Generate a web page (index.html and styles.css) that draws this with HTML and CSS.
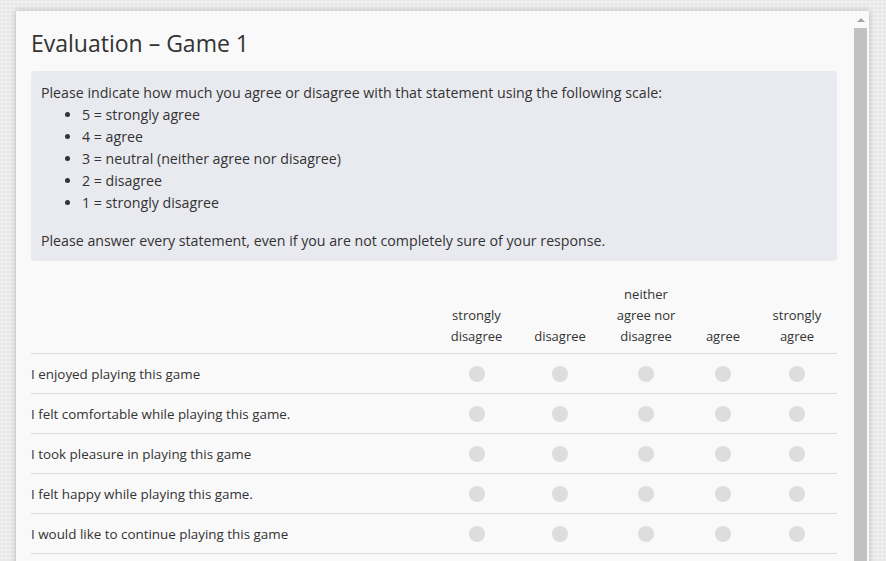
FILE: index.html
```html
<!DOCTYPE html>
<html>
<head>
<meta charset="utf-8">
<link rel="stylesheet" href="styles.css">
</head>
<body>
<div class="card">
  <div class="content">
    <h1 class="title">Evaluation – Game 1</h1>
    <div class="info">
      <p class="info-lead">Please indicate how much you agree or disagree with that statement using the following scale:</p>
      <ul class="scale">
        <li>5 = strongly agree</li>
        <li>4 = agree</li>
        <li>3 = neutral (neither agree nor disagree)</li>
        <li>2 = disagree</li>
        <li>1 = strongly disagree</li>
      </ul>
      <p class="info-note">Please answer every statement, even if you are not completely sure of your response.</p>
    </div>
    <div class="survey">
      <div class="head stmt"></div>
      <div class="head">strongly<br>disagree</div>
      <div class="head">disagree</div>
      <div class="head">neither<br>agree nor<br>disagree</div>
      <div class="head">agree</div>
      <div class="head">strongly<br>agree</div>

      <div class="cell stmt">I enjoyed playing this game</div>
      <div class="cell"><span class="radio"></span></div>
      <div class="cell"><span class="radio"></span></div>
      <div class="cell"><span class="radio"></span></div>
      <div class="cell"><span class="radio"></span></div>
      <div class="cell"><span class="radio"></span></div>

      <div class="cell stmt">I felt comfortable while playing this game.</div>
      <div class="cell"><span class="radio"></span></div>
      <div class="cell"><span class="radio"></span></div>
      <div class="cell"><span class="radio"></span></div>
      <div class="cell"><span class="radio"></span></div>
      <div class="cell"><span class="radio"></span></div>

      <div class="cell stmt">I took pleasure in playing this game</div>
      <div class="cell"><span class="radio"></span></div>
      <div class="cell"><span class="radio"></span></div>
      <div class="cell"><span class="radio"></span></div>
      <div class="cell"><span class="radio"></span></div>
      <div class="cell"><span class="radio"></span></div>

      <div class="cell stmt">I felt happy while playing this game.</div>
      <div class="cell"><span class="radio"></span></div>
      <div class="cell"><span class="radio"></span></div>
      <div class="cell"><span class="radio"></span></div>
      <div class="cell"><span class="radio"></span></div>
      <div class="cell"><span class="radio"></span></div>

      <div class="cell stmt">I would like to continue playing this game</div>
      <div class="cell"><span class="radio"></span></div>
      <div class="cell"><span class="radio"></span></div>
      <div class="cell"><span class="radio"></span></div>
      <div class="cell"><span class="radio"></span></div>
      <div class="cell"><span class="radio"></span></div>
    </div>
  </div>
  <div class="scrollbar">
    <div class="arrow"></div>
    <div class="thumb"></div>
  </div>
</div>
</body>
</html>
```
FILE: styles.css
```css
html, body {
  margin: 0;
  padding: 0;
  height: 100%;
  overflow: hidden;
}
body {
  background-color: #e9e9e9;
  background-image: radial-gradient(circle, #f4f4f4 0.8px, transparent 1.2px);
  background-size: 4px 4px;
  font-family: "Open Sans", "Noto Sans", sans-serif;
  color: #333;
}
.card {
  margin: 11px 0 0 16px;
  width: 853px;
  height: 600px;
  background: #f9f9f9;
  box-shadow: 0 0 6px rgba(0, 0, 0, 0.25);
  display: flex;
  box-sizing: border-box;
  padding-right: 2px;
}
.content {
  flex: 1;
  padding: 0 17px 0 15px;
}
.title {
  margin: 17px 0 13px;
  font-size: 23px;
  font-weight: 400;
  line-height: 30px;
  color: #333;
}
.info {
  background: #e9eaef;
  border-radius: 4px;
  padding: 11px 10px 9px;
  font-size: 14.2px;
  line-height: 22px;
}
.info p { margin: 0; }
.scale {
  margin: 0 0 16px;
  padding-left: 41px;
}
.survey {
  margin-top: 23px;
  display: grid;
  grid-template-columns: 1fr 81px 86px 86px 68px 80px;
  font-size: 13px;
}
.head {
  display: flex;
  align-items: flex-end;
  justify-content: center;
  text-align: center;
  line-height: 21px;
  padding-bottom: 6px;
  border-bottom: 1px solid #dcdcdc;
}
.cell {
  height: 39px;
  display: flex;
  align-items: center;
  justify-content: center;
  border-bottom: 1px solid #dcdcdc;
}
.cell.stmt {
  justify-content: flex-start;
  font-size: 13.4px;
}
.radio {
  width: 16px;
  height: 16px;
  border-radius: 50%;
  background: #dddddd;
}
.scrollbar {
  width: 13px;
  display: flex;
  flex-direction: column;
  align-items: center;
}
.arrow {
  margin: 7px 0 6px;
  width: 0;
  height: 0;
  border-left: 4px solid transparent;
  border-right: 4px solid transparent;
  border-bottom: 4px solid #a3a3a3;
}
.thumb {
  width: 13px;
  flex: 1;
  background: #c1c1c1;
}
```
